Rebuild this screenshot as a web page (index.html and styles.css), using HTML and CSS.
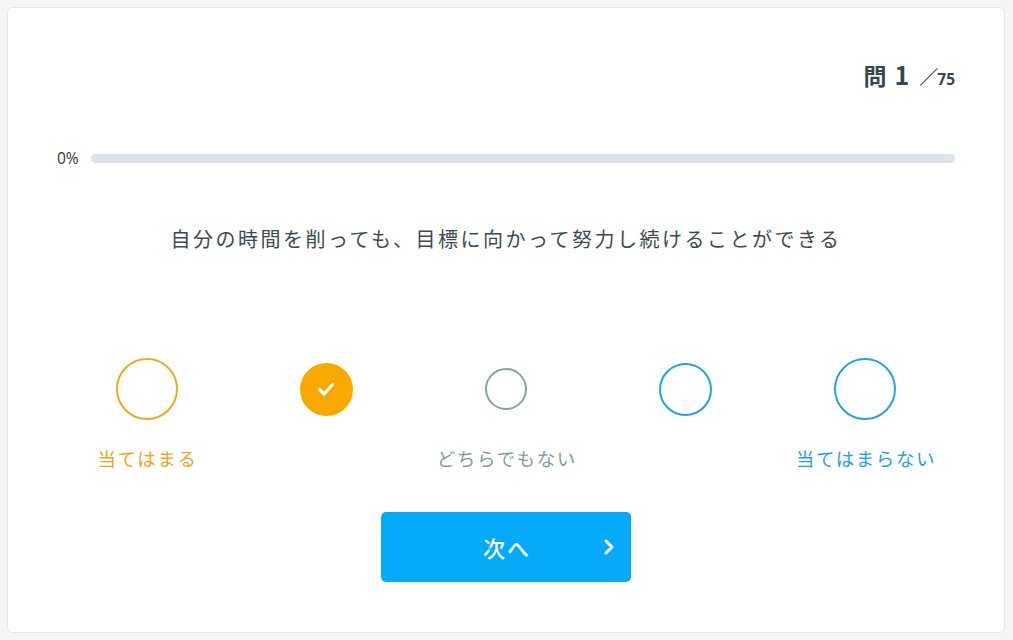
FILE: index.html
```html
<!DOCTYPE html>
<html lang="ja">
<head>
<meta charset="utf-8">
<link rel="stylesheet" href="styles.css">
</head>
<body>
<div class="card">
  <div class="header">
    <span class="q-label">問</span><span class="q-num">1</span><span class="q-slash">／</span><span class="q-total">75</span>
  </div>
  <div class="progress">
    <span class="progress-label">0%</span>
    <div class="progress-track"><div class="progress-fill" style="width:0%"></div></div>
  </div>
  <p class="question">自分の時間を削っても、目標に向かって努力し続けることができる</p>
  <div class="options">
    <div class="option">
      <div class="circle-area"><span class="circle c-lg orange"></span></div>
      <span class="label orange-text">当てはまる</span>
    </div>
    <div class="option">
      <div class="circle-area"><span class="circle c-md orange filled">
        <svg width="22" height="22" viewBox="0 0 22 22"><path d="M4.5 11.5 L9 16 L17.5 6.5" fill="none" stroke="#fff" stroke-width="3.2" stroke-linecap="round" stroke-linejoin="round"/></svg>
      </span></div>
      <span class="label"></span>
    </div>
    <div class="option">
      <div class="circle-area"><span class="circle c-sm grey"></span></div>
      <span class="label grey-text">どちらでもない</span>
    </div>
    <div class="option">
      <div class="circle-area"><span class="circle c-md blue"></span></div>
      <span class="label"></span>
    </div>
    <div class="option">
      <div class="circle-area"><span class="circle c-lg blue"></span></div>
      <span class="label blue-text">当てはまらない</span>
    </div>
  </div>
  <div class="actions">
    <button class="next-btn">
      <span class="next-text">次へ</span>
      <svg class="chev" width="12" height="18" viewBox="0 0 12 18"><path d="M3 3 L9 9 L3 15" fill="none" stroke="#fff" stroke-width="3" stroke-linecap="round" stroke-linejoin="round"/></svg>
    </button>
  </div>
</div>
</body>
</html>
```

FILE: styles.css
```css
* { box-sizing: border-box; }
html, body { margin: 0; padding: 0; }
body {
  background: #f4f6f6;
  padding: 7px 8px 7px 7px;
  font-family: "Noto Sans CJK JP", "Noto Sans", sans-serif;
  color: #37474f;
}
.card {
  background: #fff;
  border: 1px solid #e3e8e8;
  border-radius: 6px;
  height: 626px;
  padding: 51px 49px 0 49px;
  display: flex;
  flex-direction: column;
}
.header {
  display: flex;
  justify-content: flex-end;
  align-items: baseline;
  height: 30px;
  line-height: 30px;
  font-weight: 700;
  color: #37474f;
}
.q-label { font-size: 23px; }
.q-num { font-size: 25px; margin-left: 8px; font-family: "Noto Sans CJK JP", "Noto Sans", sans-serif; }
.q-slash { font-size: 19px; font-weight: 700; margin-left: 10px; }
.q-total { font-size: 15.5px; font-family: "Open Sans", "Noto Sans", sans-serif; margin-left: -1px; }
.progress {
  display: flex;
  align-items: center;
  height: 20px;
  margin-top: 59px;
  gap: 12px;
}
.progress-label {
  font-family: "Open Sans", "Noto Sans", sans-serif;
  font-size: 15.5px;
  color: #333;
}
.progress-track {
  flex: 1;
  height: 9px;
  border-radius: 5px;
  background: #dce4ea;
  overflow: hidden;
}
.progress-fill { height: 100%; background: #03a9f4; }
.question {
  margin: 56px 0 0 0;
  text-align: center;
  font-size: 20px;
  line-height: 30px;
  letter-spacing: 2.5px;
  color: #3d4a4f;
}
.options {
  display: grid;
  grid-template-columns: repeat(5, 1fr);
  margin-top: 100px;
}
.option {
  display: flex;
  flex-direction: column;
  align-items: center;
}
.circle-area {
  height: 70px;
  display: flex;
  align-items: center;
  justify-content: center;
}
.circle {
  display: flex;
  align-items: center;
  justify-content: center;
  border-radius: 50%;
  border: 2px solid;
}
.c-lg { width: 62px; height: 62px; }
.c-md { width: 53px; height: 53px; }
.c-sm { width: 42px; height: 42px; border-width: 2.5px; }
.orange { border-color: #f2aa1c; }
.filled { background: #f9a800; border-color: #f9a800; }
.grey { border-color: #88a2a2; }
.blue { border-color: #1fa4e8; }
.label {
  margin-top: 21px;
  height: 26px;
  line-height: 26px;
  font-size: 18.5px;
  letter-spacing: 1.6px;
  margin-right: -1.6px;
}
.orange-text { color: #f0a41a; }
.grey-text { color: #7f9c9c; }
.blue-text { color: #1fa2e4; }
.actions {
  display: flex;
  justify-content: center;
  margin-top: 41px;
}
.next-btn {
  position: relative;
  width: 250px;
  height: 70px;
  border: none;
  border-radius: 5px;
  background: #05aaf8;
  color: #fff;
  font-family: "Noto Sans CJK JP", "Noto Sans", sans-serif;
  font-size: 22px;
  font-weight: 500;
  display: flex;
  align-items: center;
  justify-content: center;
  padding: 0;
}
.next-text { letter-spacing: 2px; margin-right: -2px; }
.chev {
  position: absolute;
  right: 16px;
  top: 26px;
}
```
